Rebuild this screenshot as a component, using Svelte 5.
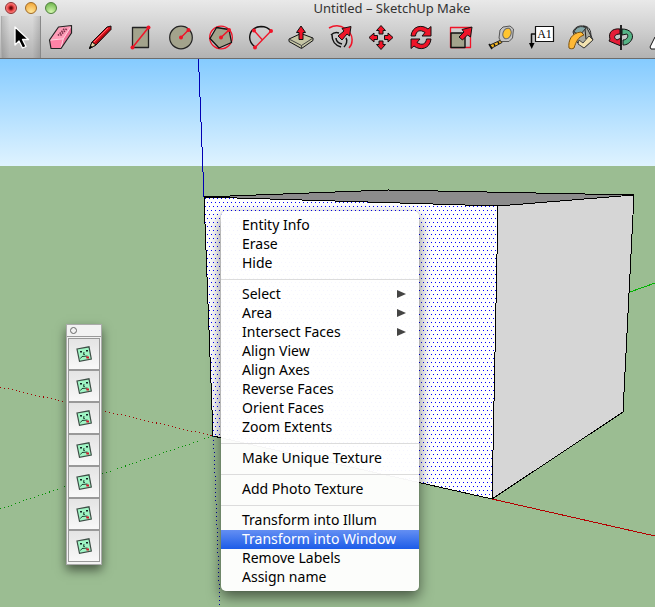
<script>
  const groups = [
    [{ t: 'Entity Info' }, { t: 'Erase' }, { t: 'Hide' }],
    [
      { t: 'Select', sub: true },
      { t: 'Area', sub: true },
      { t: 'Intersect Faces', sub: true },
      { t: 'Align View' },
      { t: 'Align Axes' },
      { t: 'Reverse Faces' },
      { t: 'Orient Faces' },
      { t: 'Zoom Extents' }
    ],
    [{ t: 'Make Unique Texture' }],
    [{ t: 'Add Photo Texture' }],
    [
      { t: 'Transform into Illum' },
      { t: 'Transform into Window', active: true },
      { t: 'Remove Labels' },
      { t: 'Assign name' }
    ]
  ];
  const tools = [
    'Select', 'Eraser', 'Line', 'Rectangle', 'Circle', 'Polygon', 'Arc', 'Push/Pull', 'Offset',
    'Move', 'Rotate', 'Scale', 'Tape Measure', 'Text', 'Paint Bucket', 'Orbit', 'Pan'
  ];
  const plugins = [1, 2, 3, 4, 5, 6, 7];
</script>

<div class="window">
  <header>
    <div class="titlebar">
      <div class="lights">
        <button class="light red" aria-label="Close"></button>
        <button class="light amber" aria-label="Minimize"></button>
        <button class="light green" aria-label="Zoom"></button>
      </div>
      <h1>Untitled – SketchUp Make</h1>
    </div>
    <div class="toolbar" role="toolbar" aria-label="Tools">
      {#each tools as name, i}
        <button class="tool" class:selected={i === 0} aria-label={name}>
          <svg viewBox="0 0 28 28" width="28" height="28" stroke-linejoin="round">
            {#if name === 'Select'}
              <path d="M8 4v18l4-4 3.500 7 3.500-1.500-3.500-7h6z" fill="#000" stroke="#fff" stroke-width="1.300" />
            {:else if name === 'Eraser'}
              <path d="M2.500 17 11.500 4 24.500 2.500 16.500 15.500z" fill="#ff9db8" />
              <path d="M2.500 17 4 25.500 14 25.500 16.500 15.500z" fill="#ff83a7" />
              <path d="M16.500 15.500 24.500 2.500V10L14 25.500z" fill="#ed7095" />
              <path d="M11 12.500 18 5M13.500 12.500 20 5.500" stroke="#7c3049" stroke-width="1.600" stroke-dasharray="1.500 1" />
              <path d="M2.500 17.200 16.300 15.800 24 3.500M16.300 15.800 14 25" fill="none" stroke="#ffd3df" />
              <path d="M2.500 17 11.500 4 24.500 2.500V10L14 25.500H4z" fill="none" stroke="#222" stroke-width="1.200" />
            {:else if name === 'Line'}
              <path d="M2.500 25.500 5 19 20 4 24 3 24 6.500 9 22z" fill="#d8101c" stroke="#111" />
              <path d="M2.500 25.500 5 19 9 22z" fill="#e9d2a0" stroke="#111" />
              <path d="M2 26 3.500 22.500 5.500 24z" />
              <path d="M7 19 21 5" stroke="#ff6b6b" />
              <path d="M9 20.500 23.500 6" stroke="#700" />
            {:else if name === 'Rectangle'}
              <path d="M5.500 4.500h16v20h-16z" fill="#a3a38c" stroke="#222" stroke-width="1.300" />
              <path d="M5.500 24.500 21.500 4.500" stroke="#f01428" stroke-width="1.500" />
              <circle cx="5.500" cy="24.500" r="2" fill="#f01428" /><circle cx="21.500" cy="4.500" r="2" fill="#f01428" />
            {:else if name === 'Circle'}
              <circle cx="14" cy="14.500" r="11.300" fill="#a3a38c" stroke="#222" stroke-width="1.200" />
              <path d="M14 14.500 21.500 7" stroke="#f01428" stroke-width="1.500" />
              <circle cx="14" cy="14.500" r="2" fill="#f01428" /><circle cx="21.500" cy="7" r="2" fill="#f01428" />
            {:else if name === 'Polygon'}
              <circle cx="14" cy="14.500" r="11.300" fill="none" stroke="#f01428" stroke-width="1.300" />
              <path d="M22 6.500 24.500 19.500 12 25 3 15.500 9.500 4.500z" fill="#a3a38c" stroke="#111" stroke-width="1.300" />
              <path d="M14 14.500 22 7" stroke="#f01428" stroke-width="1.500" />
              <circle cx="14" cy="14.500" r="2" fill="#f01428" /><circle cx="22" cy="7" r="2" fill="#f01428" />
            {:else if name === 'Arc'}
              <path d="M8 24C-1 17 2 4 14 3.500c5 0 8 2 10 4.500" fill="none" stroke="#111" stroke-width="1.400" />
              <path d="M8 24.500 24 8M7 7.500l8 9" stroke="#f01428" stroke-width="1.300" />
              <circle cx="8" cy="24.500" r="2" fill="#f01428" /><circle cx="24" cy="8" r="2" fill="#f01428" /><circle cx="7" cy="7.500" r="2" fill="#f01428" />
            {:else if name === 'Push/Pull'}
              <path d="M2 16 14 10.500 26 15V17.500L14.500 25.500 2 18.500z" fill="#c5c5a4" stroke="#111" />
              <path d="M2 16 14.500 22.500 26 15M14.500 22.500v3" fill="none" stroke="#444" />
              <path d="M12 16.500V9.500H9.500L14 3 18.500 9.500H16v7z" fill="#f01428" stroke="#111" />
            {:else if name === 'Offset'}
              <path d="M2 5c12-7 24 4 23 13 0 3-1 5-3 7" fill="none" stroke="#f01428" stroke-width="1.500" />
              <path d="M4 12c2-2 5-3 8-2M5 12c0 7 3 10 9 12M19 15c2 3 0 7-2 9M9 15c0 3 2 5 6 6" fill="none" stroke="#111" stroke-width="1.500" />
              <path d="M11 13 17 8 15 5.500 24 3.500 22.500 13 20 11 15 17z" fill="#f01428" stroke="#111" />
            {:else if name === 'Move'}
              <path d="M14 2.500l4.500 5H16v3.500h-4V7.500H9.500zM14 26.500l4.500-5H16V18h-4v3.500H9.500zM2 14.500l5-4.500v2.500h3.500v4H7V19zM26 14.500 21 10v2.500h-3.500v4H21V19z" fill="#f01428" stroke="#111" />
            {:else if name === 'Rotate'}
              <path d="M4 13C5 3 15 1 21 6l3-2.500V13h-9l3-3.500C13 6 9 8 8.500 13z" fill="#f01428" stroke="#111" />
              <path d="M24 16C23 26 13 28 7 23l-3 2.500V16h9l-3 3.500C15 23 19 21 19.500 16z" fill="#f01428" stroke="#111" />
            {:else if name === 'Scale'}
              <path d="M3.500 4.500h20v20h-20z" fill="none" stroke="#f01428" stroke-width="1.300" />
              <path d="M4 10h14v14.500H4z" fill="#a3a38c" stroke="#111" stroke-width="1.400" />
              <path d="M12 14 17 9 15 6.500 25 4 23.500 14 20.500 12 15.500 17z" fill="#f01428" stroke="#111" />
            {:else if name === 'Tape Measure'}
              <path d="M13 7 16 4 23 3 26.500 6 25.500 15 22 18.500H14L12 15z" fill="#c4c4c4" stroke="#555" />
              <ellipse cx="20" cy="10.500" rx="4" ry="5.500" fill="#ffc52e" stroke="#666" transform="rotate(20 20 10.500)" />
              <path d="M3 22 13 17.500 15 19.500 5 25z" fill="#f2b420" stroke="#222" />
              <path d="M2 21 5 26M7 21l1 2M11 19l1 2" stroke="#111" stroke-width="1.500" />
            {:else if name === 'Text'}
              <path d="M8.500 3.500h18v15h-18z" fill="#fff" stroke="#111" stroke-width="1.200" />
              <path d="M8 11H4.500V22" fill="none" stroke="#111" stroke-width="1.500" /><path d="M2 20h5.500L4.700 26z" />
              <text x="17.500" y="15" text-anchor="middle" font-family="Liberation Serif, serif" font-size="12">A1</text>
            {:else if name === 'Paint Bucket'}
              <path d="M6 9C8 3 15 1 20 5L26 17 17 25 10 19z" fill="#a9aaa0" stroke="#222" />
              <path d="M12 17 16 20 22 13 26 17 17 25 11 21z" fill="#f2e2b0" stroke="#444" />
              <path d="M7 9C9 4 14 2 19 5L13 12z" fill="#83a7a8" stroke="#333" />
              <path d="M2 25C1 18 4 10 14 9l3 3C11 14 9 19 7 25c-1 1-4 1-5 0z" fill="#ffb936" stroke="#7c5210" />
              <path d="M16 3c6 0 8 4 8 11M18 6l1 10" stroke="#222" fill="none" />
            {:else if name === 'Orbit'}
              <path d="M13 6C5 5 1 10 3 16l-1 2 7 3 5 2v-8l-4 2C6 15 7 11 13 11z" fill="#e51d37" stroke="#111" />
              <path d="M15 6c8 0 12 5 10 10-2 4-5 6-9 6v-5c4 0 6-4 4-6l-5 1z" fill="#55b486" stroke="#111" />
              <path d="M14 2v25" stroke="#111" stroke-width="1.800" />
            {:else}
              <path d="M3 24C5 21 6 17 8 14L12 10 26 10V26H4z" fill="#fff" stroke="#111" />
            {/if}
          </svg>
        </button>
      {/each}
    </div>
  </header>

  <main>
    <svg class="scene" width="1200" height="900" viewBox="0 59 1200 900" shape-rendering="crispEdges" aria-label="Model view">
      <defs>
        <pattern id="dots" width="4" height="8" patternUnits="userSpaceOnUse">
          <rect x="3" y="2" width="1" height="1" fill="#0000ff" />
          <rect x="1" y="6" width="1" height="1" fill="#0000ff" />
        </pattern>
      </defs>
      <path d="M204 197 498 206 492 499 213 436z" fill="#fff" />
      <path d="M204 197 498 206 492 499 213 436z" fill="url(#dots)" />
      <path d="M204 197 388 190 634 195 498 206z" fill="#8c8c8c" />
      <path d="M498 206 634 195 623 412 492 499z" fill="#d6d6d6" />
      <path d="M204 197 388 190 634 195 498 206zL213 436 492 499 498 206M634 195 623 412 492 499" fill="none" stroke="#000" />
      <path d="M198.500 59 204 197" stroke="#0000b4" />
      <path d="M492 499 655 536 1200 660" stroke="#b40000" fill="none" />
      <path d="M630 292 655 283 1200 87" stroke="#00b400" fill="none" />
      <g fill="none" stroke-dasharray="1 3">
        <path d="M0 387 213 436" stroke="#a00000" />
        <path d="M0 509 213 436" stroke="#009000" />
        <path d="M213.500 436 220 607" stroke="#0000a0" />
      </g>
    </svg>

    <section class="palette" aria-label="Plugins">
      <div class="grip"><button aria-label="Close palette"></button></div>
      <div class="stack">
        {#each plugins as n}
          <button class="plugin" aria-label={`Plugin ${n}`}>
            <svg viewBox="0 0 16 16" width="16" height="16">
              <path d="M1 3 13 .8 15.300 13 3.500 15.300z" fill="#9ff5c4" stroke="#3c4c44" stroke-width="1.200" />
              <path d="M4 5h2v1.500H4zM10 4h2v1.500h-2z" fill="#122" />
              <path d="M8 6 7.500 8.500 9 8.300M4.500 12.500 6 10.500 11.500 10" fill="none" stroke="#243" />
              <path d="M10 10.500h3v2h-2.500z" fill="#d4142a" />
            </svg>
          </button>
        {/each}
      </div>
    </section>

    <div class="menu" role="menu">
      {#each groups as items}
        <div class="group">
          {#each items as item}
            <button role="menuitem" class="item" class:active={item.active}>
              <span>{item.t}</span>
              {#if item.sub}<i class="arrow"></i>{/if}
            </button>
          {/each}
        </div>
      {/each}
    </div>
  </main>
</div>

<style>
  :global(body) { margin: 0; overflow: hidden; }
  .window {
    display: flex; flex-direction: column; min-height: 100vh; overflow: hidden;
    font-family: 'Noto Sans', 'Open Sans', sans-serif; font-size: 14px; color: #000;
  }
  button { padding: 0; border: 0; background: none; font: inherit; color: inherit; }
  header { height: 58px; border-bottom: 1px solid #6c6c6c; background: linear-gradient(#e9e9e9, #d0d0d0 50%, #b2b2b2); overflow: hidden; }
  .titlebar { display: flex; align-items: center; height: 16px; padding-left: 5px; }
  .lights { display: flex; gap: 8px; }
  .light { width: 12px; height: 12px; border-radius: 50%; box-sizing: border-box; }
  .red { border: 1px solid #8e2b2b; background: radial-gradient(circle at 50% 50%, #6b0808 0 1px, #ee4a4a 3px, #ffa3a0 6px); }
  .amber { border: 1px solid #a06a25; background: radial-gradient(circle at 50% 90%, #ffe79a, #f2a83c 9px, #fff 12px); }
  .green { border: 1px solid #4f7f3c; background: radial-gradient(circle at 50% 90%, #d5f8b0, #72b850 9px, #fff 12px); }
  h1 { flex: 1; margin: 0; padding-left: 72px; text-align: center; font-size: 13px; font-weight: 400; line-height: 16px; color: #333; white-space: nowrap; }
  .toolbar { display: flex; height: 42px; padding-left: 1px; }
  .tool { flex: 0 0 40px; height: 42px; display: grid; place-items: center; }
  .selected { box-sizing: border-box; border-left: 1px solid #aaa; border-right: 1px solid #888; background: linear-gradient(90deg, #0002, #0000 20% 80%, #0002); }
  main { position: relative; flex: 1; overflow: hidden; background: linear-gradient(#85cbff, #dff3ff 107px, #9bbd92 107px); }
  .scene { position: absolute; left: 0; top: 0; }
  .palette {
    position: absolute; left: 66px; top: 265px; width: 36px; box-sizing: border-box;
    border: 1px solid #aaa; background: #f2f2f2; box-shadow: 0 5px 10px #0008;
  }
  .grip { height: 11px; border-bottom: 1px solid #999; padding-left: 3px; display: flex; align-items: center; }
  .grip button { width: 7px; height: 7px; box-sizing: border-box; border: 1px solid #666; border-radius: 50%; }
  .stack { display: flex; flex-direction: column; gap: 2px; margin: 1px 1px 2px; padding: 1px; background: #999; }
  .plugin { height: 30px; display: grid; place-items: center; background: linear-gradient(#e4e4e4, #f8f8f8); }
  .menu {
    position: absolute; left: 221px; top: 152px; width: 198px; padding: 5px 0 4px; border-radius: 5px;
    background: #fffffff6; box-shadow: 0 6px 14px #0008, 0 0 1px #0006;
  }
  .group + .group { margin-top: 6px; padding-top: 5px; border-top: 1px solid #dcdcdc; }
  .item { display: flex; align-items: center; justify-content: space-between; width: 100%; height: 19px; padding: 0 13px 2px 21px; line-height: 17px; white-space: nowrap; }
  .active { color: #fff; background: linear-gradient(#648ff3, #1c5ce8); }
  .arrow { border-left: 9px solid #444; border-top: 4px solid transparent; border-bottom: 4px solid transparent; }
</style>
